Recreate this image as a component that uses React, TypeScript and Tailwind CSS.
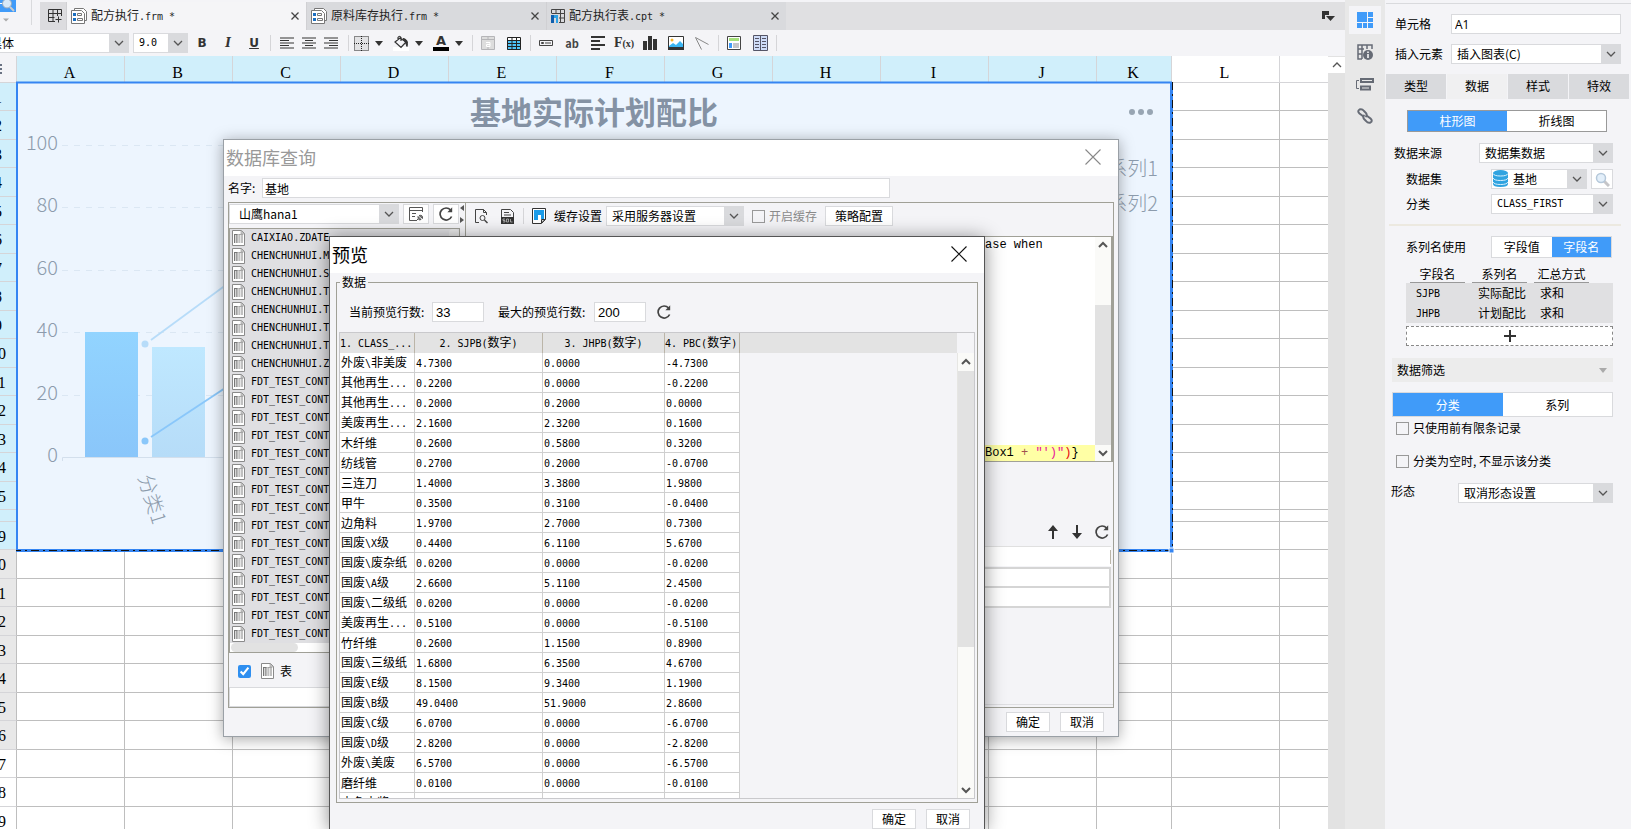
import { useState, type ReactNode } from 'react';
import clsx from 'clsx';

const COLUMNS = [
  { name: 'A', width: 'w-[108px]', selected: true },
  { name: 'B', width: 'w-[108px]', selected: true },
  { name: 'C', width: 'w-[108px]', selected: true },
  { name: 'D', width: 'w-[108px]', selected: true },
  { name: 'E', width: 'w-[108px]', selected: true },
  { name: 'F', width: 'w-[108px]', selected: true },
  { name: 'G', width: 'w-[108px]', selected: true },
  { name: 'H', width: 'w-[108px]', selected: true },
  { name: 'I', width: 'w-[108px]', selected: true },
  { name: 'J', width: 'w-[108px]', selected: true },
  { name: 'K', width: 'w-[75px]', selected: true },
  { name: 'L', width: 'w-[108px]', selected: false },
];

// rows 16-18 are collapsed into one thin strip
const ROWS = [
  '1', '2', '3', '4', '5', '6', '7', '8', '9', '10', '11', '12', '13', '14', '15', '',
  '19', '20', '21', '22', '23', '24', '25', '26', '27', '28', '29',
];

const TABLES = [
  'CAIXIAO.ZDATE',
  'CHENCHUNHUI.M',
  'CHENCHUNHUI.S',
  ...Array(4).fill('CHENCHUNHUI.T'),
  'CHENCHUNHUI.Z',
  ...Array(15).fill('FDT_TEST_CONT'),
] as string[];

const PREVIEW = [
  ['外废\\非美废', '4.7300', '0.0000', '-4.7300'],
  ['其他再生...', '0.2200', '0.0000', '-0.2200'],
  ['其他再生...', '0.2000', '0.2000', '0.0000'],
  ['美废再生...', '2.1600', '2.3200', '0.1600'],
  ['木纤维', '0.2600', '0.5800', '0.3200'],
  ['纺线管', '0.2700', '0.2000', '-0.0700'],
  ['三连刀', '1.4000', '3.3800', '1.9800'],
  ['甲牛', '0.3500', '0.3100', '-0.0400'],
  ['边角料', '1.9700', '2.7000', '0.7300'],
  ['国废\\X级', '0.4400', '6.1100', '5.6700'],
  ['国废\\废杂纸', '0.0200', '0.0000', '-0.0200'],
  ['国废\\A级', '2.6600', '5.1100', '2.4500'],
  ['国废\\二级纸', '0.0200', '0.0000', '-0.0200'],
  ['美废再生...', '0.5100', '0.0000', '-0.5100'],
  ['竹纤维', '0.2600', '1.1500', '0.8900'],
  ['国废\\三级纸', '1.6800', '6.3500', '4.6700'],
  ['国废\\E级', '8.1500', '9.3400', '1.1900'],
  ['国废\\B级', '49.0400', '51.9000', '2.8600'],
  ['国废\\C级', '6.0700', '0.0000', '-6.0700'],
  ['国废\\D级', '2.8200', '0.0000', '-2.8200'],
  ['外废\\美废', '6.5700', '0.0000', '-6.5700'],
  ['磨纤维', '0.0100', '0.0000', '-0.0100'],
  ['本色木浆\\', '', '', ''],
];

// Latin runs are set half the width of the Chinese glyphs around them
function Mixed({ text }: { text: string }) {
  return (
    <>
      {text.split(/([\x20-\x7e]+)/).map((part, i) =>
        i % 2 ? (
          <span key={i} className="whitespace-pre font-['DejaVu_Sans_Mono',monospace] text-[10px]">
            {part}
          </span>
        ) : (
          part
        ),
      )}
    </>
  );
}

function Chevron({ up = false, bold = false }: { up?: boolean; bold?: boolean }) {
  return (
    <svg width="10" height="10" viewBox="0 0 10 10" fill="none" stroke="#555" strokeWidth={bold ? 2 : 1.3}>
      <path d={up ? 'M1 7 5 3l4 4' : 'M1 3l4 4 4-4'} />
    </svg>
  );
}

function Caret({ color = '#333' }: { color?: string }) {
  return (
    <svg width="8" height="5" viewBox="0 0 8 5" fill={color}>
      <path d="M0 0h8L4 5z" />
    </svg>
  );
}

type SelectProps = { label: string; value: string; className: string; latin?: boolean; icon?: ReactNode };

function Select({ label, value, className, latin, icon }: SelectProps) {
  return (
    <div className={clsx('flex h-5 shrink-0 border border-[#d9dadd] bg-white', className)}>
      {icon}
      <select
        aria-label={label}
        className={clsx(
          'min-w-0 flex-1 appearance-none bg-white pl-[5px] leading-4 outline-none',
          latin ? "font-['DejaVu_Sans_Mono',monospace] text-[10px]" : 'text-xs',
        )}
      >
        <option>{value}</option>
      </select>
      <span className="flex w-[19px] items-center justify-center bg-[#d9dadd]">
        <Chevron />
      </span>
    </div>
  );
}

type ToggleProps = { options: string[]; className: string };

function Toggle({ options, className, initial = 0 }: ToggleProps & { initial?: number }) {
  const [active, setActive] = useState(initial);
  return (
    <div className={clsx('flex border bg-white', className)}>
      {options.map((option, i) => (
        <button
          key={option}
          type="button"
          onClick={() => setActive(i)}
          className={clsx('flex-1', i === active && 'bg-[#409bf9] text-white')}
        >
          {option}
        </button>
      ))}
    </div>
  );
}

function DialogButton({ children, className = 'w-11' }: { children: ReactNode; className?: string }) {
  return (
    <button type="button" className={clsx('h-5 border border-[#d9dadd] bg-white', className)}>
      {children}
    </button>
  );
}

function CloseIcon({ color }: { color: string }) {
  return (
    <svg width="16" height="16" viewBox="0 0 16 16" fill="none" stroke={color} strokeWidth="1.1">
      <path d="M.5.5l15 15M15.5.5l-15 15" />
    </svg>
  );
}

function RefreshIcon() {
  return (
    <svg width="14" height="14" viewBox="0 0 14 14" fill="none" stroke="#444" strokeWidth="1.7">
      <path d="M12.600 9.500A6 6 0 1 1 11.600 3" />
      <path d="M13.200.2v5H8.400z" fill="#444" stroke="none" />
    </svg>
  );
}

function TableIcon() {
  return (
    <svg width="13" height="16" viewBox="0 0 13 16" fill="none" className="shrink-0">
      <path d="M.5.5h9l3 3v12H.5z" fill="#fff" stroke="#8a8a8a" />
      <path d="M9 .5v3.500h3.500z" fill="#ccc" stroke="#999" strokeWidth=".6" />
      <path d="M2 4h4v9H2z" fill="#777" />
      <path d="M6 4h5v9H6z" fill="#a5a5a5" />
      <path d="M3.500 5v8M6 4v9M8.500 5v8M3 6h8M3 8h8M3 10h8M3 12h8" stroke="#fff" strokeWidth=".6" />
    </svg>
  );
}

function FormIcon() {
  return (
    <svg width="16" height="16" viewBox="0 0 16 16" fill="none" stroke="#777">
      <path d="M3.5 2.5v-2h9l3 3v9h-2" fill="#fff" />
      <path d="M.5 2.5h10l3 3v10H.5z" fill="#fff" />
      <path d="M2 5h3v3H2zM2 10h3v3H2z" fill="#1c6fc0" stroke="none" />
      <path d="M6.5 5.5h4v2h-4zM6.5 10.5h5v2h-5z" />
    </svg>
  );
}

function ReportIcon() {
  return (
    <svg width="14" height="14" viewBox="0 0 14 14" fill="none" stroke="#444">
      <path d="M.5 4V.5h13v13H8M.5 4.5h13M5 .5v4M9.5.5v13M8 9h5.5" />
      <path d="M0 6h3v8H0z" fill="#0f5fae" stroke="none" />
      <path d="M3 6h4v8H5V9H3z" fill="#2fa3e6" stroke="none" />
    </svg>
  );
}

const FILE_TABS = [
  { title: '配方执行.frm *', icon: <FormIcon />, active: true },
  { title: '原料库存执行.frm *', icon: <FormIcon />, active: false },
  { title: '配方执行表.cpt *', icon: <ReportIcon />, active: false },
];

function FileTabs() {
  return (
    <div className="flex h-[30px] shrink-0">
      <div className="flex w-8 flex-col items-start">
        <div className="h-[25px] w-full border-r border-[#d9dadd]">
          <svg width="16" height="24" viewBox="0 0 16 24">
            <path d="M0 0h16v12H0z" fill="#409bf9" />
            <path d="M0 3h5v1H0z" fill="#fff" />
            <circle cx="7" cy="3.500" r="4.500" fill="#d6e8f8" stroke="#9ab" />
            <path d="M10 7l4 4" stroke="#ccc" strokeWidth="2" />
            <path d="M3 18.500h6l-3 3z" fill="#aaa" />
          </svg>
        </div>
      </div>
      <div className="ml-2 mt-[2px] flex flex-1 bg-[#e0e0e2]">
        <button type="button" aria-label="新建" className="flex w-[26px] items-center justify-center bg-[#dcdcdf] pl-1">
          <svg width="14" height="14" viewBox="0 0 14 14" fill="none" stroke="#333">
            <path d="M7 12.500H.5V.5h13V7M.5 4.500h13M5 .5v12M9.500.5V7M.5 8.500h6M10.500 7.500v6M7.500 10.500h6" />
          </svg>
        </button>
        {FILE_TABS.map((tab) => (
          <div
            key={tab.title}
            className={clsx(
              'flex w-60 items-center border-l border-[#d0d0d3] pl-1 pr-[3px]',
              tab.active ? 'bg-[#f5f5f7]' : 'bg-[#d9dadd]',
            )}
          >
            {tab.icon}
            <span className="ml-1 flex-1 text-[#222]">
              <Mixed text={tab.title} />
            </span>
            <button type="button" aria-label="关闭" className="p-1">
              <svg width="8" height="8" viewBox="0 0 8 8" stroke="#444" strokeWidth="1.3">
                <path d="M.5.5l7 7M7.500.5l-7 7" />
              </svg>
            </button>
          </div>
        ))}
        <div className="flex flex-1 items-center justify-end pr-[10px]">
          <svg width="13" height="10" viewBox="0 0 13 10" fill="#333">
            <path d="M0 0h7v4H3v4H0z" />
            <path d="M4 5h9L8.500 10z" />
          </svg>
        </div>
      </div>
    </div>
  );
}

function Tool({ label, className = 'w-[26px]', children }: { label: string; className?: string; children: ReactNode }) {
  return (
    <button type="button" aria-label={label} className={clsx('flex h-5 items-center justify-center', className)}>
      {children}
    </button>
  );
}

function ToolSeparator() {
  return <span className="ml-[3px] mr-[2px] h-4 w-0 border-l border-[#d5d5d8]" />;
}

function AlignIcon({ d }: { d: string }) {
  return (
    <svg width="14" height="12" viewBox="0 0 14 12" stroke="#333" strokeWidth="1.1">
      <path d={d} />
    </svg>
  );
}

function Toolbar() {
  return (
    <div className="flex h-[26px] shrink-0 items-center">
      <Select label="字体" value="黑体" className="-ml-4 w-[145px]" />
      <Select label="字号" value="9.0" className="ml-1 mr-[1px] w-[55px]" latin />
      <Tool label="加粗">
        <span className="font-['DejaVu_Sans',sans-serif] text-xs font-bold text-[#333]">B</span>
      </Tool>
      <Tool label="斜体">
        <span className="font-['DejaVu_Serif',serif] text-xs font-bold italic text-[#333]">I</span>
      </Tool>
      <Tool label="下划线">
        <span className="font-['DejaVu_Sans',sans-serif] text-xs font-bold text-[#333] underline">U</span>
      </Tool>
      <ToolSeparator />
      <div className="flex px-[3px]">
        <Tool label="左对齐" className="w-[22px]">
          <AlignIcon d="M0 1h14M0 3.500h9M0 6h14M0 8.500h9M0 11h14" />
        </Tool>
        <Tool label="居中" className="w-[22px]">
          <AlignIcon d="M0 1h14M3 3.500h8M0 6h14M3 8.500h8M0 11h14" />
        </Tool>
        <Tool label="右对齐" className="w-[22px]">
          <AlignIcon d="M0 1h14M5 3.500h9M0 6h14M5 8.500h9M0 11h14" />
        </Tool>
      </div>
      <ToolSeparator />
      <div className="flex gap-[6px] pr-1">
        <Tool label="边框" className="w-[34px] gap-[6px]">
          <svg width="15" height="15" viewBox="0 0 15 15" fill="#e2e2e4" stroke="#222" strokeDasharray="1 1">
            <path d="M.5.5h14v14H.5zM7.500 0v15M0 7.500h15" />
          </svg>
          <Caret />
        </Tool>
        <Tool label="填充" className="w-[34px] gap-[6px]">
          <svg width="16" height="16" viewBox="0 0 16 16" fill="none" stroke="#333">
            <path d="M0 12h16v4H0z" fill="#fff" stroke="none" />
            <path d="M2 7l5-4 6 4-5 5.500zM5 5V2.500q1.500-2.500 3 0V6" strokeWidth="1.2" />
            <path d="M10 3.500q4.500.5 4.500 5l-.5 3-1.500-4z" fill="#333" />
          </svg>
          <Caret />
        </Tool>
        <Tool label="字体颜色" className="w-[34px] gap-[6px]">
          <span className="w-4 border-b-4 border-black text-center font-['DejaVu_Sans',sans-serif] text-[13px] font-bold leading-3 text-[#333]">
            A
          </span>
          <Caret />
        </Tool>
      </div>
      <ToolSeparator />
      <Tool label="单元格">
        <svg width="14" height="14" viewBox="0 0 14 14" fill="#ddd" stroke="#b5b5b8">
          <path d="M.5.5h13v13H.5zM.5 3.500h13M7 .5v3M7 11v3" />
          <path d="M5 6.500h4v4H5.500V8.500H9" fill="none" stroke="#fff" />
        </svg>
      </Tool>
      <Tool label="表格">
        <svg width="14" height="13" viewBox="0 0 14 13" fill="none" stroke="#222">
          <path d="M0 0h14v13H0z" fill="#4ec3f7" stroke="none" />
          <path d="M0 0h14v3H0z" fill="#fff" stroke="none" />
          <path d="M.5.5h13v12H.5zM.5 3.500h13M.5 6.500h13M.5 9.500h13M5 .5v12M9.500.5v12" />
        </svg>
      </Tool>
      <ToolSeparator />
      <Tool label="控件">
        <svg width="14" height="6" viewBox="0 0 14 6" fill="none" stroke="#444">
          <path d="M.5.5h13v5H.5zM2.500 2.500h2v1h-2zM6 3h6" />
        </svg>
      </Tool>
      <Tool label="文本">
        <span className="text-[11px] font-bold text-[#444]">ab</span>
      </Tool>
      <Tool label="富文本">
        <svg width="14" height="14" viewBox="0 0 14 14" stroke="#333" strokeWidth="2">
          <path d="M0 1h14M0 5h9M0 9h14M0 13h9" />
        </svg>
      </Tool>
      <Tool label="公式">
        <span className="font-['Liberation_Serif',serif] text-sm font-bold text-[#333]">
          F<span className="text-[10px]">(x)</span>
        </span>
      </Tool>
      <Tool label="图表">
        <svg width="14" height="14" viewBox="0 0 14 14" fill="#333">
          <path d="M0 5h4v9H0zM5 0h4v14H5zM10 3h4v11h-4z" />
        </svg>
      </Tool>
      <Tool label="图片">
        <svg width="16" height="14" viewBox="0 0 16 14">
          <path d="M.5.500h15v13H.5z" fill="#fff" stroke="#333" />
          <path d="M1 10l4-3 3 2 4-4 3 3v3H1z" fill="#3bb5f2" />
          <path d="M0 11h16v3H0z" fill="#333" />
          <circle cx="4" cy="4" r="1.500" fill="#f7b52c" />
        </svg>
      </Tool>
      <Tool label="斜线">
        <svg width="14" height="13" viewBox="0 0 14 13" stroke="#888">
          <path d="M.5.500l13 7M.5.500l6 12" />
        </svg>
      </Tool>
      <ToolSeparator />
      <Tool label="报表块">
        <svg width="14" height="14" viewBox="0 0 14 14">
          <path d="M.5.5h13v13H.5z" fill="#fff" stroke="#444" />
          <path d="M2 2h10v3H2z" fill="#a5e07a" />
          <path d="M2 7h3v5H2z" fill="#409bf9" />
          <path d="M6 7h6v5H6z" fill="#c5c5c8" />
        </svg>
      </Tool>
      <Tool label="文档">
        <svg width="15" height="16" viewBox="0 0 15 16" stroke="#556">
          <path d="M.5.5h14v15H.5z" fill="#cfdcf8" />
          <path d="M7.500 1v14M2 3.500h4M2 6.500h4M2 9.500h4M2 12.500h4M9 3.500h4M9 6.500h4M9 9.500h4M9 12.500h4" />
        </svg>
      </Tool>
      <ToolSeparator />
    </div>
  );
}

const TICKS = [
  { value: 100, y: 145 },
  { value: 80, y: 207 },
  { value: 60, y: 270 },
  { value: 40, y: 332 },
  { value: 20, y: 395 },
];

function Chart() {
  return (
    <svg
      width="1160"
      height="476"
      viewBox="16 80 1160 476"
      className="absolute left-4 top-6 font-['Noto_Sans_CJK_SC',sans-serif]"
    >
      <defs>
        <linearGradient id="bar-dark" x1="0" y1="0" x2="0" y2="1">
          <stop offset="0" stopColor="#92d4ff" />
          <stop offset="1" stopColor="#8ac6fa" />
        </linearGradient>
        <linearGradient id="bar-light" x1="0" y1="0" x2="0" y2="1">
          <stop offset="0" stopColor="#bfe8ff" />
          <stop offset="1" stopColor="#b6dcf8" />
        </linearGradient>
      </defs>
      <path d="M17 82h1155v468H17z" fill="#edf5fe" />
      <text x="594" y="124" fontSize="31" fontWeight="700" textAnchor="middle" fill="#8492a4">
        基地实际计划配比
      </text>
      <g fill="#98a5b3">
        <circle cx="1132" cy="112" r="3" />
        <circle cx="1141" cy="112" r="3" />
        <circle cx="1150" cy="112" r="3" />
      </g>
      <g fontSize="20" fontWeight="300" fill="#8c9bac" textAnchor="end">
        {TICKS.map((tick) => (
          <text key={tick.value} x="58" y={tick.y + 5}>
            {tick.value}
          </text>
        ))}
        <text x="58" y="462">0</text>
        <text x="1158" y="176">系列1</text>
        <text x="1158" y="211">系列2</text>
      </g>
      {TICKS.map((tick) => (
        <path key={tick.value} d={`M62 ${tick.y + 0.5}H1100`} stroke="#dbe7f3" strokeDasharray="6 6" />
      ))}
      <path d="M62.500 461v-3.500H1100" fill="none" stroke="#d3dfec" />
      <path d="M85 332h53v125H85z" fill="url(#bar-dark)" />
      <path d="M152 347h53v110h-53z" fill="url(#bar-light)" />
      <path d="M151 340l109-80" stroke="#b7dcf9" strokeWidth="1.800" />
      <circle cx="145" cy="344" r="3.500" fill="#b7dcf9" />
      <path d="M151 437l109-72" stroke="#8ac7fa" strokeWidth="1.800" />
      <circle cx="145" cy="441" r="3.500" fill="#8ac7fa" />
      <text
        transform="translate(138 477) rotate(73)"
        fontSize="20"
        fontWeight="300"
        fill="#8c9bac"
      >
        分类1
      </text>
      <path d="M17 550V82.500h1155" fill="none" stroke="#3585f2" strokeWidth="2" />
      <path d="M1171.500 82v468.500H16" fill="none" stroke="#3585f2" strokeWidth="3" />
      <path d="M1172.500 82v468.500H16" fill="none" stroke="#111" strokeDasharray="8 4 2 4" />
      <path d="M1169 548h5v5h-5z" fill="#3585f2" stroke="#fff" />
    </svg>
  );
}

function rowHeight(index: number) {
  if (index === 15) return 'h-3';
  return index % 2 === 0 ? 'h-7' : 'h-[29px]';
}

function Sheet() {
  return (
    <div className="flex min-h-0 flex-1">
      <div className="relative flex min-w-0 flex-1 flex-col overflow-hidden bg-white">
        <div className="flex h-[27px] shrink-0 border-b border-[#d5d5d8]">
          <div className="flex w-[17px] shrink-0 flex-col items-start justify-center gap-[2px] border-r border-[#d5d5d8] bg-[#f4f4f7]">
            <span className="h-[2px] w-[2px] bg-gray-500" />
            <span className="h-[2px] w-[2px] bg-gray-500" />
            <span className="h-[2px] w-[2px] bg-gray-500" />
          </div>
          {COLUMNS.map((column) => (
            <div
              key={column.name}
              className={clsx(
                "flex shrink-0 items-center justify-center border-r border-[#d5d5d8] pr-[2px] pt-2 font-['Liberation_Serif',serif] text-base leading-4",
                column.width,
                column.selected ? 'bg-[#d0effb]' : 'bg-white',
              )}
            >
              {column.name}
            </div>
          ))}
        </div>
        {ROWS.map((row, i) => (
          <div key={i} className={clsx('flex shrink-0', rowHeight(i))}>
            <div
              className={clsx(
                'flex w-[17px] shrink-0 items-center justify-end overflow-hidden border-b border-r border-b-[#d5d5d8] border-r-[#bebebe]',
                i < 17 ? 'bg-[#d0effb]' : i < 24 ? 'bg-[#e8e8e8]' : 'bg-white',
              )}
            >
              <span className="w-9 shrink-0 pt-[2px] text-center font-['Liberation_Serif',serif] text-base leading-4">
                {row}
              </span>
            </div>
            {COLUMNS.map((column) => (
              <div key={column.name} className={clsx('shrink-0 border-b border-r border-[#bebebe]', column.width)} />
            ))}
            <div className="flex-1 border-b border-[#bebebe]" />
          </div>
        ))}
        <Chart />
      </div>
      <div className="w-[17px] shrink-0 bg-[#e2e2e2]">
        <div className="mt-px flex h-4 items-center justify-center bg-white">
          <Chevron up />
        </div>
      </div>
    </div>
  );
}

function QueryDialog() {
  return (
    <section className="absolute left-[223px] top-[139px] flex h-[598px] w-[896px] flex-col border border-[#9aa0a6] bg-[#f4f4f7] shadow-[0_2px_14px_rgba(0,0,0,0.35)]">
      <header className="flex h-9 shrink-0 items-center justify-between bg-white pb-[2px] pl-[2px] pr-[17px]">
        <h2 className="text-lg leading-6 text-[#999]">数据库查询</h2>
        <button type="button" aria-label="关闭">
          <CloseIcon color="#888" />
        </button>
      </header>
      <div className="mt-[2px] flex h-5 items-center pl-1">
        <label htmlFor="query-name" className="w-[34px]">
          名字:
        </label>
        <input id="query-name" defaultValue="基地" className="h-5 w-[628px] border border-[#d9dadd] bg-white px-[2px]" />
      </div>
      <div className="mx-1 mt-1 flex min-h-0 flex-1 border border-[#a0a097]">
        <div className="flex w-[231px] shrink-0 flex-col">
          <div className="flex h-[21px] items-center gap-1">
            <Select label="数据连接" value="山鹰hana1" className="w-[170px] pl-1" />
            <button type="button" aria-label="连接设置" className="flex h-5 w-[26px] items-center justify-center border border-[#d9dadd] bg-white">
              <svg width="14" height="14" viewBox="0 0 14 14" fill="none" stroke="#555">
                <path d="M7 13.500H.5V.5h13V5M.5 3.500h13M3 6.500h4M3 9.500h3" />
                <path d="M7 14l2-2M9 9.500l3 3q-3 1.500-3-3zM10 8.500l3.500 3q.5-4-3.500-3z" fill="#888" />
              </svg>
            </button>
            <button type="button" aria-label="刷新" className="flex h-5 w-[26px] items-center justify-center border border-[#d9dadd] bg-white">
              <RefreshIcon />
            </button>
          </div>
          <div className="mt-1 flex h-[425px] shrink-0 flex-col border border-[#a0a097] bg-[#dfdfe2]">
            <div className="flex flex-1">
              <ul className="flex-1 overflow-hidden">
                {TABLES.map((name, i) => (
                  <li key={i} className="flex h-[18px] items-center gap-[6px] pl-[2px]">
                    <TableIcon />
                    <Mixed text={name} />
                  </li>
                ))}
              </ul>
              <span className="h-40 w-[10px] rounded-sm bg-[#eaeaea]" />
            </div>
            <div className="h-[10px] bg-white px-px">
              <div className="h-[9px] w-[67px] rounded-full bg-[#e2e2e2]" />
            </div>
          </div>
          <label className="flex flex-1 items-center gap-2 pl-[9px] pt-[2px]">
            <input type="checkbox" defaultChecked className="h-[13px] w-[13px] accent-[#2f8ff0]" />
            <span className="ml-[2px] flex items-center gap-[6px]">
              <TableIcon />表
            </span>
          </label>
          <input aria-label="搜索" className="h-5 shrink-0 border border-[#d9dadd] bg-white" />
        </div>
        <div className="flex w-[5px] shrink-0 flex-col gap-[5px] pt-[2px]">
          <svg width="4" height="18" viewBox="0 0 4 18" fill="#555">
            <path d="M4 0v6L0 3zM0 12v6l4-3z" />
          </svg>
        </div>
        <div className="flex min-w-0 flex-1 flex-col border-l border-[#a0a097]">
          <div className="flex h-[33px] shrink-0 items-center pb-[7px] pl-[9px]">
            <button type="button" aria-label="预览" className="flex w-[13px] items-center">
              <svg width="13" height="15" viewBox="0 0 13 15" fill="none" stroke="#444">
                <path d="M4 13.500H.5V.500h8l3 3V6M8.500.5v3h3" />
                <circle cx="7.500" cy="9" r="2.500" />
                <path d="M9.500 11l3 3" strokeWidth="1.500" />
              </svg>
            </button>
            <button type="button" aria-label="SQL" className="ml-[13px] flex w-[13px] items-center">
              <svg width="13" height="15" viewBox="0 0 13 15" fill="none" stroke="#444">
                <path d="M.5 8V.500h9l3 3V8M3 3.500h5M3 6h7" />
                <path d="M0 8h13v7H0z" fill="#333" stroke="none" />
                <path d="M4 10H2v1.500h2V13H2M7.500 10h-2v3h2zM9.500 10v3h2" stroke="#ccc" strokeWidth=".7" />
              </svg>
            </button>
            <span className="ml-[9px] mr-2 h-4 border-l border-[#d5d5d8]" />
            <span className="flex items-center gap-2">
              <svg width="14" height="16" viewBox="0 0 14 16">
                <path d="M.5.5h13v11l-4 4h-9z" fill="#fff" stroke="#333" />
                <path d="M2 2h10v9H9V7H6v5H2z" fill="#1b9be8" />
                <path d="M13 11.500H9.500V15z" fill="#ddd" stroke="#333" />
              </svg>
              缓存设置
            </span>
            <Select label="缓存设置" value="采用服务器设置" className="ml-1 w-[138px]" />
            <label className="ml-2 flex items-center gap-1 text-[#8a8a8a]">
              <input type="checkbox" className="h-[13px] w-[13px] appearance-none border border-[#999] bg-[#f4f4f7]" />
              开启缓存
            </label>
            <DialogButton className="ml-2 w-[68px]">策略配置</DialogButton>
          </div>
          <div className="flex h-[226px] shrink-0 border-y border-r-2 border-[#a0a097] bg-white">
            <pre className="flex flex-1 flex-col justify-between overflow-hidden font-['Liberation_Mono',monospace] text-xs leading-4">
              <code className="pl-[519px]">ase when</code>
              <code className="bg-[#ffffa5] pl-[519px]">
                Box1 <span className="text-[#a05050]">+</span> <span className="text-[#e8109c]">"')"</span>
                <span className="text-red-600">)</span>
                {'}'}
              </code>
            </pre>
            <div className="flex w-4 flex-col items-center bg-[#fafaf8]">
              <span className="flex h-4 items-center">
                <Chevron up bold />
              </span>
              <span className="mt-[52px] w-full flex-1 bg-[#e2e2e2]" />
              <span className="flex h-4 items-center">
                <Chevron bold />
              </span>
            </div>
          </div>
          <div className="mt-[62px] flex h-4 items-center justify-end gap-3 pr-1">
            <button type="button" aria-label="上移">
              <svg width="12" height="14" viewBox="0 0 12 14" fill="#333">
                <path d="M6 0l5 6H7v8H5V6H1z" />
              </svg>
            </button>
            <button type="button" aria-label="下移">
              <svg width="12" height="14" viewBox="0 0 12 14" fill="#333">
                <path d="M6 14l5-6H7V0H5v8H1z" />
              </svg>
            </button>
            <button type="button" aria-label="刷新">
              <RefreshIcon />
            </button>
          </div>
          <div className="mr-[2px] mt-[6px] flex flex-col">
            <div className="flex h-5 items-center justify-end border-t border-[#e0e0e0] bg-white">
              <span className="h-[14px] border-l border-[#bbb5a8]" />
            </div>
            <div className="mt-px h-[21px] border-2 border-[#d5d5d5] bg-white" />
            <div className="h-5 border-2 border-t-0 border-[#d5d5d5] bg-white" />
          </div>
          <div className="mb-[2px] mt-auto border-b border-[#dfdfe2]" />
        </div>
      </div>
      <footer className="flex h-7 shrink-0 items-center justify-end gap-[10px] pr-[14px]">
        <DialogButton>确定</DialogButton>
        <DialogButton>取消</DialogButton>
      </footer>
    </section>
  );
}

const HEADS = [
  { title: '1. CLASS_...', width: 'w-[75px]', align: 'text-left' },
  { title: '2. SJPB(数字)', width: 'w-[128px]', align: 'text-center' },
  { title: '3. JHPB(数字)', width: 'w-[122px]', align: 'text-center' },
  { title: '4. PBC(数字)', width: 'w-[75px]', align: 'text-left' },
];

function PreviewDialog() {
  return (
    <section className="absolute bottom-0 left-[329px] top-[236px] flex w-[656px] flex-col border border-b-0 border-[#555] bg-[#f4f4f7] shadow-[0_2px_18px_rgba(0,0,0,0.45)]">
      <header className="flex h-9 shrink-0 items-center justify-between bg-white pb-[2px] pl-[2px] pr-[17px]">
        <h2 className="text-lg leading-6">预览</h2>
        <button type="button" aria-label="关闭">
          <CloseIcon color="#111" />
        </button>
      </header>
      <fieldset className="mx-[6px] mt-px flex min-h-0 flex-1 flex-col border border-[#a0a097] px-[2px] pb-[3px]">
        <legend className="ml-px px-[2px] leading-4">数据</legend>
        <div className="mt-3 flex h-5 shrink-0 items-center pl-[10px]">
          <label htmlFor="current-rows" className="w-[83px]">
            当前预览行数:
          </label>
          <input
            id="current-rows"
            defaultValue="33"
            className="h-5 w-[52px] border border-[#d9dadd] bg-white px-[3px] font-['Liberation_Sans',sans-serif] text-[13px]"
          />
          <label htmlFor="max-rows" className="ml-[14px] w-24">
            最大的预览行数:
          </label>
          <input
            id="max-rows"
            defaultValue="200"
            className="h-5 w-[52px] border border-[#d9dadd] bg-white px-[3px] font-['Liberation_Sans',sans-serif] text-[13px]"
          />
          <button type="button" aria-label="刷新" className="ml-[11px]">
            <RefreshIcon />
          </button>
        </div>
        <div className="mt-[10px] flex min-h-0 flex-1 border border-[#c9c9cc]">
          <div className="min-w-0 flex-1 overflow-hidden">
            <div className="bg-[#e3e3e3]">
              <table className="w-[400px] table-fixed border-separate border-spacing-0">
                <thead>
                  <tr className="h-5">
                    {HEADS.map((head) => (
                      <th
                        key={head.title}
                        className={clsx('overflow-hidden whitespace-nowrap border-r border-[#bbb5a8] p-0 font-normal leading-4', head.width, head.align)}
                      >
                        <Mixed text={head.title} />
                      </th>
                    ))}
                  </tr>
                </thead>
              </table>
            </div>
            <table className="w-[400px] table-fixed border-separate border-spacing-0 bg-white">
              <tbody>
                {PREVIEW.map((row, i) => (
                  <tr key={i} className="h-5">
                    {row.map((cell, j) => (
                      <td
                        key={j}
                        className={clsx('overflow-hidden whitespace-nowrap border-b border-r border-[#cfcfcf] p-0 pl-px leading-4', HEADS[j].width)}
                      >
                        <Mixed text={cell} />
                      </td>
                    ))}
                  </tr>
                ))}
              </tbody>
            </table>
          </div>
          <div className="mt-5 flex w-[17px] shrink-0 flex-col items-center border-l border-[#e6e6e3] bg-[#fafaf8]">
            <span className="flex h-[18px] items-center">
              <Chevron up bold />
            </span>
            <span className="h-[276px] w-full bg-[#e2e2e2]" />
            <span className="mt-auto flex h-4 items-center">
              <Chevron bold />
            </span>
          </div>
        </div>
      </fieldset>
      <footer className="flex h-[26px] shrink-0 items-end justify-end gap-[10px] pr-[14px]">
        <DialogButton>确定</DialogButton>
        <DialogButton>取消</DialogButton>
      </footer>
    </section>
  );
}

function SideIcons() {
  return (
    <nav className="flex w-10 shrink-0 flex-col items-center gap-1 bg-[#e8e8e8] pt-[6px]">
      <button type="button" aria-label="单元格元素" className="flex h-7 w-8 items-center justify-center bg-[#f4f4f7]">
        <svg width="16" height="16" viewBox="0 0 16 16" fill="#409bf9">
          <path d="M0 0h10v10H0zM11 0h5v5h-5zM11 6h5v4h-5zM0 11h5v5H0zM6 11h4v5H6zM11 11h5v5h-5z" />
        </svg>
      </button>
      <button type="button" aria-label="单元格属性" className="flex h-7 w-8 items-center justify-center">
        <svg width="16" height="17" viewBox="0 0 16 17" fill="none" stroke="#666b75" strokeWidth="1.500">
          <path d="M5 15H1V1h14v4M1 5h6M5 1v14M1 10h4M10 1v4" />
          <circle cx="11" cy="11" r="5" fill="#666b75" stroke="none" />
          <path d="M11 7.500v1.500M11 10v4" stroke="#fff" />
        </svg>
      </button>
      <button type="button" aria-label="悬浮元素" className="flex h-7 w-8 items-center justify-center">
        <svg width="18" height="13" viewBox="0 0 18 13" fill="none" stroke="#666b75" strokeWidth="2">
          <path d="M5 1h12v3H5zM5 8.500h9v3H5z" />
          <path d="M3 2.500H.5v8H3" strokeWidth="1" />
        </svg>
      </button>
      <button type="button" aria-label="超级链接" className="flex h-7 w-8 items-center justify-center">
        <svg width="16" height="16" viewBox="0 0 16 16" fill="none" stroke="#666b75" strokeWidth="2">
          <path d="M6.500 8.500L2.500 5.500Q0 3 2.500 1.500 5 .5 7 3l2 2q1.500 2.500-.5 4" />
          <path d="M9.500 7.500l4 3q2.500 2.500 0 4-2.500 1-4.500-1.500l-2-2q-1.500-2.500.5-4" />
        </svg>
      </button>
    </nav>
  );
}

const SERIES = [
  { field: 'SJPB', name: '实际配比', method: '求和' },
  { field: 'JHPB', name: '计划配比', method: '求和' },
];

function PropertyPanel() {
  const [tab, setTab] = useState('数据');
  return (
    <aside className="flex w-[246px] shrink-0 flex-col bg-[#f4f4f7] pt-[3px]">
      <div className="ml-px border-t border-[#d9dadd]" />
      <div className="mt-[10px] flex items-center pl-[10px]">
        <label htmlFor="cell" className="w-14">
          单元格
        </label>
        <input
          id="cell"
          defaultValue="A1"
          className="mr-[10px] h-5 min-w-0 flex-1 border border-[#d9dadd] bg-white px-[3px] font-['Open_Sans',sans-serif]"
        />
      </div>
      <div className="mt-[10px] flex items-center pl-[10px] pr-[10px]">
        <span className="w-14">插入元素</span>
        <Select label="插入元素" value="插入图表(C)" className="flex-1" />
      </div>
      <div className="mt-[10px] flex gap-px pl-px pr-[2px]">
        {['类型', '数据', '样式', '特效'].map((name) => (
          <button
            key={name}
            type="button"
            onClick={() => setTab(name)}
            className={clsx('h-[25px] flex-1 pb-px', tab === name ? 'bg-[#f0f0f1]' : 'bg-[#d9dadd]')}
          >
            {name}
          </button>
        ))}
      </div>
      <Toggle options={['柱形图', '折线图']} className="ml-[22px] mr-6 mt-[11px] h-[22px] border-[#999]" />

      <div className="mt-[11px] flex items-center justify-between pl-[9px] pr-[18px]">
        数据来源
        <Select label="数据来源" value="数据集数据" className="w-[134px]" />
      </div>
      <div className="mt-[6px] flex items-center pl-[21px] pr-[18px]">
        <span className="flex-1">数据集</span>
        <Select
          label="数据集"
          value="基地"
          className="w-24"
          icon={
            <svg width="15" height="17" viewBox="0 0 15 17" className="ml-px">
              <path d="M0 3v11q0 3 7.500 3t7.500-3V3" fill="#2fa3e0" />
              <ellipse cx="7.500" cy="3" rx="7.500" ry="3" fill="#2fa3e0" />
              <path d="M0 3.500q1 2.500 7.500 2.500T15 3.500M0 8q1 2.500 7.500 2.500T15 8M0 12q1 2.500 7.500 2.500T15 12" fill="none" stroke="#d9f0fc" />
            </svg>
          }
        />
        <button type="button" aria-label="预览数据集" className="ml-1 flex h-5 w-[22px] items-center justify-center border border-[#d9dadd] bg-white">
          <svg width="15" height="15" viewBox="0 0 15 15" fill="none">
            <path d="M9 9l5 5" stroke="#c5c5c8" strokeWidth="3" />
            <circle cx="6" cy="6" r="4.500" fill="#e3effa" stroke="#b5c8da" strokeWidth="1.500" />
          </svg>
        </button>
      </div>
      <div className="mt-[5px] flex items-center justify-between pl-[21px] pr-[18px]">
        分类
        <Select label="分类" value="CLASS_FIRST" className="w-[122px]" latin />
      </div>
      <div className="ml-1 mr-[10px] mt-[10px] border-t-2 border-[#ece9e0]" />

      <div className="mt-[10px] flex items-center justify-between pl-[21px] pr-[19px]">
        系列名使用
        <Toggle options={['字段值', '字段名']} initial={1} className="h-[22px] w-[121px] border-[#d9dadd]" />
      </div>
      <table className="ml-[21px] mr-[18px] mt-[7px] table-fixed border-separate border-spacing-0 text-left">
        <thead>
          <tr className="h-[18px]">
            {['字段名', '系列名', '汇总方式'].map((name) => (
              <th key={name} className="w-[62px] p-0 pl-1 font-normal leading-4">
                <span className="block w-[55px] border-b border-[#999] text-center">{name}</span>
              </th>
            ))}
            <th className="p-0" />
          </tr>
        </thead>
        <tbody className="bg-[#e0e0e2]">
          {SERIES.map((item) => (
            <tr key={item.field} className="h-5">
              <td className="p-0 pl-[10px]">
                <Mixed text={item.field} />
              </td>
              <td className="p-0 pl-[10px] leading-4">{item.name}</td>
              <td className="p-0 pl-[10px] leading-4">{item.method}</td>
              <td className="p-0" />
            </tr>
          ))}
        </tbody>
      </table>
      <button
        type="button"
        aria-label="添加系列"
        className="ml-[21px] mr-[18px] mt-[3px] flex h-5 items-center justify-center border border-dashed border-[#888] bg-white"
      >
        <svg width="12" height="12" viewBox="0 0 12 12" stroke="#333" strokeWidth="2">
          <path d="M6 0v12M0 6h12" />
        </svg>
      </button>

      <button
        type="button"
        className="ml-[7px] mr-[18px] mt-3 flex h-6 items-center justify-between bg-[#ececec] pl-[5px] pr-[6px]"
      >
        数据筛选
        <Caret color="#aaa" />
      </button>
      <Toggle options={['分类', '系列']} className="ml-[7px] mr-[18px] mt-[10px] h-[25px] border-[#d9dadd]" />
      <label className="ml-[11px] mt-[3px] flex h-4 items-center gap-1">
        <input type="checkbox" className="h-[13px] w-[13px] appearance-none border border-[#999] bg-[#f4f4f7]" />
        只使用前有限条记录
      </label>
      <label className="ml-[11px] mt-[17px] flex h-4 items-center gap-1">
        <input type="checkbox" className="h-[13px] w-[13px] appearance-none border border-[#999] bg-[#f4f4f7]" />
        分类为空时, 不显示该分类
      </label>
      <div className="mt-[14px] flex items-start justify-between pl-[6px] pr-[18px]">
        形态
        <Select label="形态" value="取消形态设置" className="w-[155px]" />
      </div>
    </aside>
  );
}

export default function App() {
  return (
    <div className="relative flex h-screen overflow-hidden bg-[#f4f4f7] font-['Noto_Sans_CJK_SC',sans-serif] text-xs leading-4 text-black">
      <main className="flex min-w-0 flex-1 flex-col">
        <FileTabs />
        <Toolbar />
        <Sheet />
      </main>
      <SideIcons />
      <PropertyPanel />
      <QueryDialog />
      <PreviewDialog />
    </div>
  );
}
